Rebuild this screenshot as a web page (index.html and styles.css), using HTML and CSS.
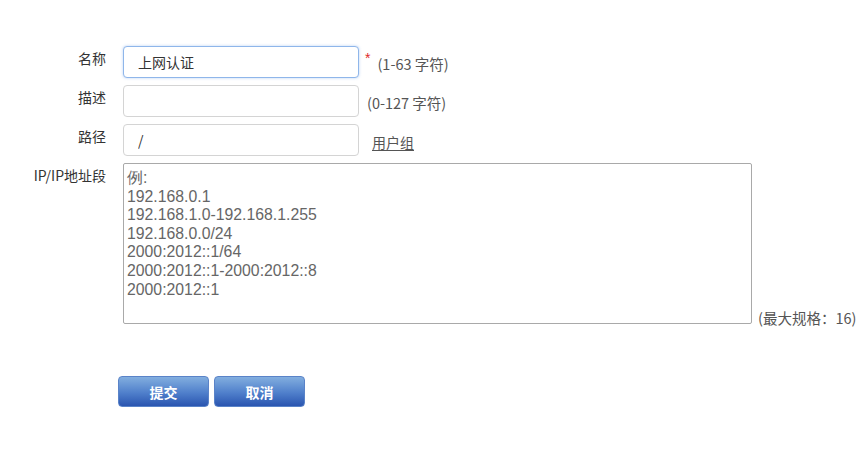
FILE: index.html
```html
<!DOCTYPE html>
<html lang="zh">
<head>
    <meta charset="UTF-8">
    <title>IP地址组</title>
    <link rel="stylesheet" href="styles.css">
</head>
<body>
    <!-- 表单 -->
    <form class="form">
        <div class="row">
            <label class="label">名称</label>
            <input class="field focused" type="text" value="上网认证">
            <span class="required">*</span>
            <span class="hint hint-name">(1-63 字符)</span>
        </div>
        <div class="row">
            <label class="label">描述</label>
            <input class="field" type="text" value="">
            <span class="hint hint-desc">(0-127 字符)</span>
        </div>
        <div class="row">
            <label class="label">路径</label>
            <input class="field path" type="text" value="/">
            <a class="link" href="#">用户组</a>
        </div>
        <div class="row row-area">
            <label class="label">IP/IP地址段</label>
            <textarea class="area" placeholder="例:
192.168.0.1
192.168.1.0-192.168.1.255
192.168.0.0/24
2000:2012::1/64
2000:2012::1-2000:2012::8
2000:2012::1"></textarea>
            <span class="hint hint-max">(最大规格：16)</span>
        </div>

        <!-- 按钮 -->
        <div class="actions">
            <button class="btn" type="button">提交</button>
            <button class="btn" type="button">取消</button>
        </div>
    </form>
</body>
</html>
```

FILE: styles.css
```css
/* 页面样式 */
body {
    margin: 0;
    background: #fff;
    font-family: "Microsoft YaHei", "Noto Sans CJK SC", "Liberation Sans", sans-serif;
    color: #333;
}

.form {
    padding-top: 46px;
}

/* 每一行 */
.row {
    display: flex;
    align-items: center;
    margin-bottom: 7px;
}

.label {
    width: 106px;
    flex: none;
    align-self: flex-start;
    padding-top: 2px;
    margin-right: 17px;
    text-align: right;
    font-size: 14px;
    line-height: 20px;
    color: #333;
}

/* 输入框 */
.field {
    box-sizing: border-box;
    width: 236px;
    height: 32px;
    margin: 0;
    padding: 0 14px;
    border: 1px solid #d4d4d4;
    border-radius: 4px;
    font-family: "Noto Sans CJK SC", "Liberation Sans", sans-serif;
    font-size: 14px;
    color: #333;
    outline: none;
}

.field.focused {
    border-color: #8fb6ea;
    box-shadow: 0 0 3px rgba(100, 150, 230, 0.45);
}

.required {
    align-self: flex-start;
    margin: 4px 0 0 6px;
    color: #e02a2a;
    font-size: 14px;
    font-family: "Liberation Sans", sans-serif;
}

.hint {
    font-size: 14.5px;
    color: #555;
}

.hint-name {
    margin-left: 7px;
    padding-top: 2px;
}

.hint-desc {
    margin-left: 8px;
    padding-top: 2px;
}

.link {
    margin-left: 13px;
    padding-top: 3px;
    font-size: 14px;
    color: #555;
    text-decoration: underline;
    text-underline-offset: 2px;
}

/* 地址段 */
.row-area {
    align-items: flex-end;
}

.area {
    box-sizing: border-box;
    width: 629px;
    height: 161px;
    margin: 0;
    padding: 5px 3px 3px;
    border: 1px solid #a9a9a9;
    border-radius: 2px;
    resize: none;
    font-family: "Liberation Sans", Arial, sans-serif;
    font-size: 15.8px;
    line-height: 18.6px;
    outline: none;
}

.area::placeholder {
    color: #666;
    opacity: 1;
}

.hint-max {
    margin-left: 6px;
    margin-bottom: -4px;
}

/* 按钮 */
.actions {
    display: flex;
    gap: 5px;
    margin: 52px 0 0 118px;
}

.btn {
    width: 91px;
    height: 31px;
    border: 1px solid #5a83c8;
    border-radius: 4px;
    background: linear-gradient(#82aedf, #4f7fcb 55%, #2a55b0);
    color: #fff;
    font-family: "Microsoft YaHei", "Noto Sans CJK SC", sans-serif;
    font-size: 14px;
    font-weight: bold;
    cursor: pointer;
}
```
